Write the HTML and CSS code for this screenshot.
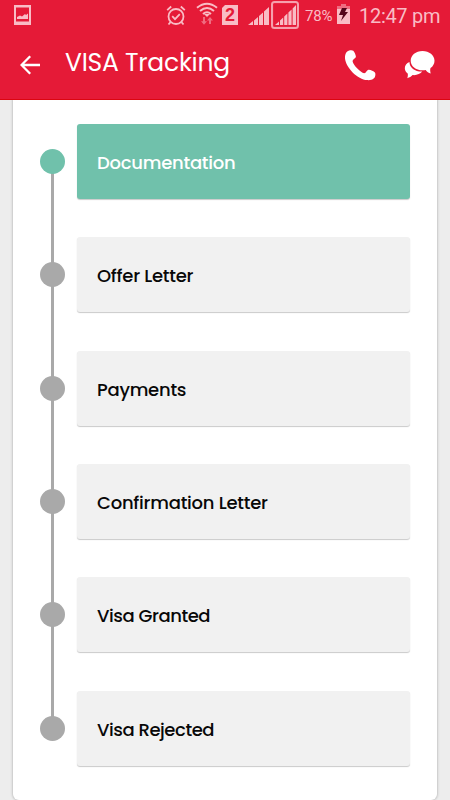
FILE: index.html
```html
<!DOCTYPE html>
<html lang="en">
<head>
<meta charset="utf-8">
<title>VISA Tracking</title>
<link rel="stylesheet" href="styles.css">
</head>
<body>
<header class="top">
  <div class="status">
    <svg class="photo" width="18" height="20" viewBox="0 0 18 20"><path fill-rule="evenodd" d="M0 0h17v20H0zM2 2.500v14h13v-14z"/><path d="M3 14v-2l3-1.500 2 1 3-2.500 1 1 2-1.500v5.500z"/></svg>
    <svg class="alarm" width="20" height="22" viewBox="0 0 20 22" fill="none" stroke="#f9bcc5" stroke-width="1.8"><circle cx="10" cy="11.5" r="7.5"/><path d="M6.2 11.2l2.8 2.900 4.800-4.900M1.200 5.200l4-3.700M18.800 5.200l-4-3.700M4.500 17.200l-2 2.300M15.500 17.200l2 2.300"/></svg>
    <svg class="wifi" width="22" height="24" viewBox="0 0 22 24" fill="none" stroke="#f9bcc5" stroke-width="2"><path d="M1 5.800Q11-2.200 21 5.800M4 9Q11 3 18 9M7 12Q11 8.500 15 12"/><path d="M8 12h6l-3 3z" fill="#f9bcc5" stroke="none"/><path d="M8 15v6M14 22v-6" stroke="#ef6c80"/><path d="M5 19.300h6l-3 3.500zM11 18.600h6l-3-3.500z" fill="#ef6c80" stroke="none"/></svg>
    <span class="sim">2</span>
    <svg class="signal" width="22" height="21" viewBox="0 0 22 21"><path d="M0 20l5-4v4zM6 15.500l4-3.500v8H6zM11 11l4-3.500V20h-4zM16 6.500l5-4.500v18h-5z"/></svg>
    <svg class="signal-box" width="28" height="28" viewBox="0 0 28 28"><rect x="1" y="1" width="26" height="26" rx="2.5" fill="#ef5369" stroke="#f6a0ad" stroke-width="2"/><rect x="2.200" y="2.200" width="23.600" height="23.600" rx="1" fill="#e51a37"/><path d="M4 24l4-3.500V24zM9 19.500l3.200-3V24H9zM13.200 15.500l3.200-3V24h-3.200zM17.400 11.500l3.200-3V24h-3.200zM21.600 7.500l3.400-3.500v20h-3.400z"/></svg>
    <span class="percent">78%</span>
    <svg class="battery" width="13" height="20" viewBox="0 0 13 20"><path fill="#ef6c80" d="M4 0h5v2h4v3H0V2h4z"/><path d="M0 5h13v15H0z"/><path fill="#54051a" d="M5 4h5L8 8h3l-7 9 2-6H2z"/></svg>
    <span class="time">12:47 pm</span>
  </div>
  <div class="bar">
    <svg class="back" width="20" height="20" viewBox="0 0 20 20" fill="none" stroke="#fff" stroke-width="2.3"><path d="M20 10H1.800M10.200 1.200L1.500 10l8.700 8.800"/></svg>
    <h1>VISA Tracking</h1>
    <svg class="phone" width="31" height="31" viewBox="0 0 31 31"><path d="M2.2 1.4C4 .1 7-.3 8.3.7c1.2 1.4 2.5 4.2 2.6 5.9 0 1.8-3.2 2.8-3.3 4.6.3 3.4 8 11.4 11.5 12 1.9.2 2.6-3.1 4.4-3.4 1.8-.2 5.4 1.4 6.4 2.8 1 1.2.4 4.4-1 5.700-1.800 1.800-4.400 2-6.800 1.800C12.800 29.700 1 17.800 0 8.500-.2 6 .3 3.200 2.200 1.400z"/></svg>
    <svg class="chat" width="31" height="28" viewBox="0 0 31 28"><path d="M5.500 11C.5 13-1 18.500 3.500 22.300c.7 1.200.3 3.400-.2 4.900 2.200-.5 3.900-1.700 5.300-3.100 4.100.4 7.700-1 9.600-3.500C11 20.800 5.300 16.800 5.500 11z"/><path d="M18.500 0C11.800 0 6.700 4.300 6.700 9.700s5.100 9.600 11.800 9.600c1.100 0 2.200-.1 3.200-.4 1.200 1.600 2.900 3 5 3.700-.5-1.900-.7-3.900-.2-5.500 2.500-1.800 4-4.500 4-7.400C30.500 4.300 25.200 0 18.500 0z"/></svg>
  </div>
</header>
<main class="sheet">
  <ol class="steps">
    <li class="step active"><i class="dot"></i><div class="card">Documentation</div></li>
    <li class="step"><i class="dot"></i><div class="card">Offer Letter</div></li>
    <li class="step"><i class="dot"></i><div class="card">Payments</div></li>
    <li class="step"><i class="dot"></i><div class="card">Confirmation Letter</div></li>
    <li class="step"><i class="dot"></i><div class="card tight">Visa Granted</div></li>
    <li class="step"><i class="dot"></i><div class="card tight">Visa Rejected</div></li>
  </ol>
</main>
</body>
</html>
```
FILE: styles.css
```css
* { box-sizing: border-box; }
body {
  margin: 0;
  height: 800px;
  overflow: hidden;
  background: #ededed;
  font-family: Poppins, Inter, sans-serif;
}
svg { display: block; flex: none; }
.top {
  position: relative;
  z-index: 1;
  height: 100px;
  background: #e51a37;
  border-bottom: 1px solid #dc0510;
}
.status {
  display: flex;
  align-items: flex-start;
  height: 30px;
  fill: #f9bcc5;
  color: #f9bcc5;
  font-family: Roboto, sans-serif;
}
.photo { margin: 5px 0 0 14px; }
.alarm { margin: 5px 0 0 134px; }
.wifi { margin: 2px 0 0 10px; }
.sim {
  width: 16px;
  height: 20px;
  margin: 5px 0 0 4px;
  background: #f9bcc5;
  color: #e51a37;
  font: bold 18px/20px "Liberation Sans", sans-serif;
  text-align: center;
  clip-path: polygon(3px 0, 100% 0, 100% 100%, 0 100%, 0 3px);
}
.signal { margin: 5px 0 0 10px; }
.signal-box { margin: 1px 0 0 1px; }
.percent {
  width: 32px;
  margin: 5px 0 0 6px;
  font-size: 15px;
  line-height: 22px;
  letter-spacing: -.2px;
}
.battery { margin: 4px 0 0 0; }
.time {
  margin: 4px 0 0 9px;
  font-size: 20px;
  line-height: 25px;
  letter-spacing: -.3px;
  white-space: nowrap;
}
.bar {
  display: flex;
  height: 69px;
  fill: #fff;
  color: #fff;
}
.back { margin: 25px 0 0 20px; }
h1 {
  width: 180px;
  margin: 17px 0 0 25px;
  font-size: 25px;
  font-weight: 400;
  line-height: 32px;
  letter-spacing: -.25px;
  white-space: nowrap;
}
.phone { margin: 20px 0 0 100px; }
.chat { margin: 21px 0 0 28px; }
.sheet {
  height: 700px;
  margin: 0 13px;
  padding: 24px 27px 0;
  background: #fff;
  border-radius: 0 0 6px 6px;
  box-shadow: 0 0 2px 1px #c8c8c8;
}
.steps {
  display: grid;
  grid-auto-rows: 113.35px;
  margin: 0;
  padding: 0;
  list-style: none;
}
.step {
  display: flex;
  align-items: flex-start;
  position: relative;
}
.step:not(:last-child)::before {
  content: "";
  position: absolute;
  left: 11px;
  top: 45px;
  width: 3px;
  height: 98px;
  background: #a9a9a9;
}
.dot {
  width: 25px;
  height: 25px;
  margin-top: 25px;
  border-radius: 50%;
  background: #a9a9a9;
  position: relative;
}
.card {
  display: flex;
  align-items: center;
  width: 333px;
  height: 75px;
  margin-left: 12px;
  padding: 3px 20px 0;
  background: #f1f1f1;
  border-radius: 3px;
  box-shadow: 0 1px 1px #cacaca;
  color: #080808;
  font-size: 18px;
  font-weight: 500;
  line-height: 24px;
  letter-spacing: -.25px;
  white-space: nowrap;
}
.tight { letter-spacing: -.45px; }
.active .dot, .active .card { background: #70c1ab; }
.active .card { color: #fff; }
```
